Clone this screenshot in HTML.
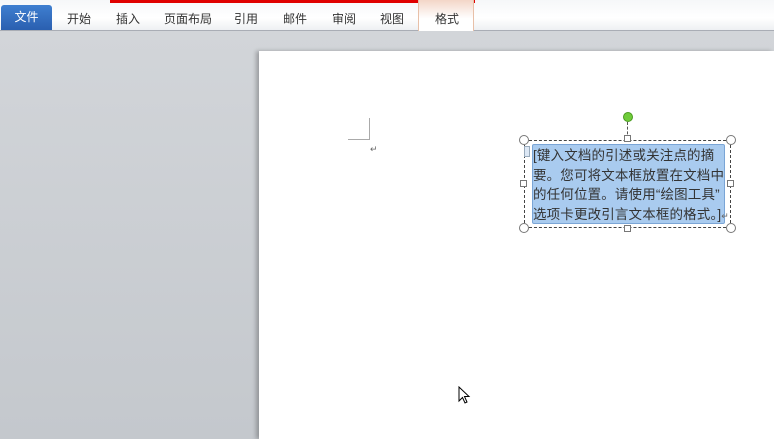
<!DOCTYPE html>
<html><head><meta charset="utf-8"><style>
*{margin:0;padding:0;box-sizing:border-box}
html,body{width:774px;height:439px;overflow:hidden}
body{position:relative;background:linear-gradient(#d3d6da,#c4c8cd);font-family:"Liberation Sans","Noto Sans CJK SC",sans-serif}
.bar{position:absolute;left:0;top:0;width:774px;height:31px;background:linear-gradient(#f6f7f9,#fff 60%,#eef0f3);border-bottom:1px solid #a9adb5}
.red{position:absolute;left:110px;top:0;width:365px;height:3px;background:#e00000}
.tab{position:absolute;top:10px;font-size:12px;color:#333}
.file{position:absolute;left:1px;top:5px;width:51px;height:25px;background:linear-gradient(#3f7fd0,#2a5fb0);border-radius:3px 3px 0 0;color:#fff;font-size:12px;text-align:center;line-height:25px}
.fmt{position:absolute;left:418px;top:0;width:56px;height:31px;background:linear-gradient(#f3d6c8,#fff 60%);border-left:1px solid #e8c0a8;border-right:1px solid #e8c0a8}
.page{position:absolute;left:259px;top:51px;width:515px;height:388px;background:#fff;box-shadow:-3px 0 4px rgba(0,0,0,.25)}
.sel{position:absolute;left:532px;top:144px;width:193px;height:80px;background:#a9cbef;border:1px solid #7aa5d6;border-radius:2px}
.txt{position:absolute;left:533px;top:146px;width:200px;font-size:13.5px;line-height:19.5px;color:#333;white-space:nowrap;letter-spacing:0.15px}
.h{position:absolute;width:8px;height:8px;border:1px solid #777;background:#fff}
.c{border-radius:50%;width:10px;height:10px}
</style></head><body>
<div class="bar"></div>
<div class="red"></div>
<div class="fmt"></div>
<div class="file">文件</div>
<div class="tab" style="left:67px">开始</div>
<div class="tab" style="left:116px">插入</div>
<div class="tab" style="left:164px">页面布局</div>
<div class="tab" style="left:234px">引用</div>
<div class="tab" style="left:283px">邮件</div>
<div class="tab" style="left:332px">审阅</div>
<div class="tab" style="left:380px">视图</div>
<div class="tab" style="left:435px">格式</div>
<div class="page"></div>
<div style="position:absolute;left:369px;top:118px;width:1px;height:22px;background:#aaa"></div>
<div style="position:absolute;left:348px;top:139px;width:22px;height:1px;background:#aaa"></div>
<div style="position:absolute;left:370px;top:144px;font-size:9px;color:#666">↵</div>
<div style="position:absolute;left:524px;top:140px;width:207px;height:88px;border:1px dashed #444"></div>
<div style="position:absolute;left:627px;top:122px;width:0;height:17px;border-left:1px dashed #555"></div>
<div style="position:absolute;left:623px;top:112px;width:10px;height:10px;border-radius:50%;background:#6fcc3a;border:1px solid #4a9a20"></div>
<div class="sel"></div>
<div class="txt">[键入文档的引述或关注点的摘<br>要。您可将文本框放置在文档中<br>的任何位置。请使用“绘图工具”<br>选项卡更改引言文本框的格式。]<span style="font-size:9px;color:#666">↵</span></div>
<div style="position:absolute;left:524px;top:146px;width:6px;height:11px;background:#dde8f5;border:1px solid #9ab"></div>
<div class="h c" style="left:519px;top:135px"></div>
<div class="h c" style="left:726px;top:135px"></div>
<div class="h c" style="left:519px;top:223px"></div>
<div class="h c" style="left:726px;top:223px"></div>
<div class="h" style="left:624px;top:135px;width:7px;height:7px"></div>
<div class="h" style="left:624px;top:225px;width:7px;height:7px"></div>
<div class="h" style="left:520px;top:180px;width:7px;height:7px"></div>
<div class="h" style="left:727px;top:180px;width:7px;height:7px"></div>
<svg style="position:absolute;left:458px;top:386px" width="14" height="20"><path d="M1 1 L1 15 L4.5 11.5 L7 17 L9 16 L6.5 10.5 L11 10.5 Z" fill="#fff" stroke="#000" stroke-width="1"/></svg>
</body></html>
